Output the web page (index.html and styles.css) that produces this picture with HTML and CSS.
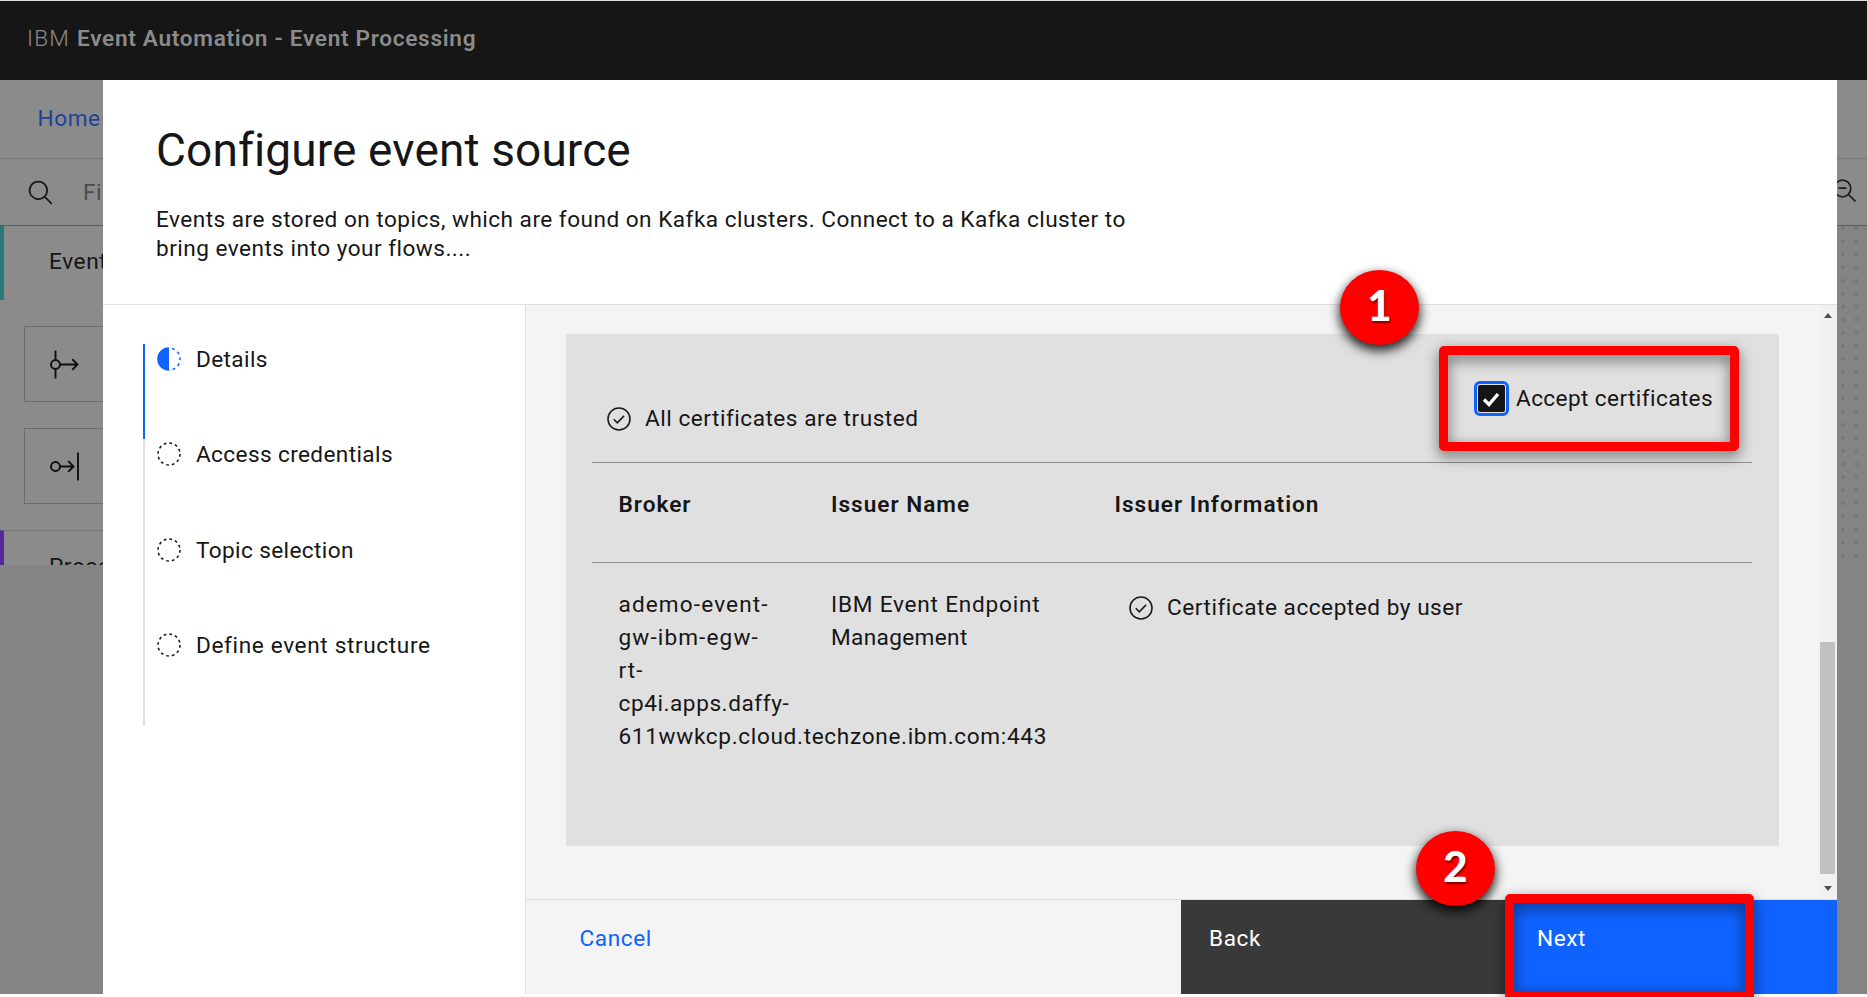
FILE: index.html
```html
<!DOCTYPE html>
<html lang="en">
<head>
<meta charset="utf-8">
<title>IBM Event Automation - Event Processing</title>
<link rel="stylesheet" href="styles.css">
</head>
<body>
<div class="app">
  <header class="topbar"><span class="brand-prefix">IBM</span><span class="brand-name">Event Automation - Event Processing</span></header>

  <div class="shell">
    <aside class="palette">
      <div class="breadcrumb">Home</div>
      <div class="search">
        <svg class="icon-search" viewBox="0 0 32 32"><path d="M29 27.586l-7.552-7.552a11.018 11.018 0 1 0-1.414 1.414L27.586 29zM4 13a9 9 0 1 1 9 9 9.01 9.01 0 0 1-9-9z"/></svg>
        <span>Find</span>
      </div>
      <div class="group group-events">Events</div>
      <div class="node"><svg viewBox="0 0 32 32"><g fill="none" stroke="#0f0f0f" stroke-width="1.9"><path d="M7.5 1.5v9M7.5 20.5v9M12 15.5h18M24.200 10.200l5.300 5.300l-5.300 5.300"/><circle cx="7.500" cy="15.500" r="4.500"/></g></svg></div>
      <div class="node"><svg viewBox="0 0 32 32"><g fill="none" stroke="#0f0f0f" stroke-width="1.9"><path d="M30 1.500v28M12 15.500h14M20.200 10.200l5.300 5.300l-5.300 5.300"/><circle cx="7.500" cy="15.500" r="4.500"/></g></svg></div>
      <div class="group group-processors">Processors</div>
    </aside>

    <main class="modal">
      <header class="modal-head">
        <h1>Configure event source</h1>
        <p>Events are stored on topics, which are found on Kafka clusters. Connect to a Kafka cluster to<br>bring events into your flows....</p>
      </header>
      <div class="modal-body">
        <nav class="steps">
          <div class="step current"><svg viewBox="0 0 24 24"><path d="M12 .2a11.800 11.800 0 0 0 0 23.600z" fill="#0f62fe"/><path d="M12 1a11 11 0 0 1 0 22" fill="none" stroke="#0f62fe" stroke-width="1.500" stroke-dasharray="3 3.200" stroke-dashoffset="-3"/></svg><span>Details</span></div>
          <div class="step"><svg viewBox="0 0 24 24"><circle class="dashes" cx="12" cy="12" r="11"/></svg><span>Access credentials</span></div>
          <div class="step"><svg viewBox="0 0 24 24"><circle class="dashes" cx="12" cy="12" r="11"/></svg><span>Topic selection</span></div>
          <div class="step"><svg viewBox="0 0 24 24"><circle class="dashes" cx="12" cy="12" r="11"/></svg><span class="step-long">Define event structure</span></div>
        </nav>
        <section class="content">
          <div class="scroll-area">
            <div class="certs">
              <div class="certs-head">
                <div class="trusted"><svg viewBox="0 0 24 24"><circle cx="12" cy="12" r="11"/><path d="M6.800 12.300l3.500 3.500l6.700-6.900"/></svg><span>All certificates are trusted</span></div>
                <div class="accept"><span class="checkbox"><svg viewBox="0 0 27 27"><path d="M6 14.500l5 5l9-10.500" fill="none" stroke="#fff" stroke-width="3.400"/></svg></span><span>Accept certificates</span></div>
              </div>
              <div class="row row-head"><span>Broker</span><span>Issuer Name</span><span>Issuer Information</span></div>
              <div class="row row-data">
                <div class="broker"><span class="host-wide">ademo-event-</span><br><span class="host-wide">gw-ibm-egw-</span><br><span class="host-wide">rt-</span><br><span class="host-tight">cp4i.apps.daffy-</span><br><span class="host">611wwkcp.cloud.techzone.ibm.com:443</span></div>
                <div><span class="issuer">IBM Event Endpoint</span><br><span class="issuer-tight">Management</span></div>
                <div class="status"><svg viewBox="0 0 24 24"><circle cx="12" cy="12" r="11"/><path d="M6.800 12.300l3.500 3.500l6.700-6.900"/></svg><span>Certificate accepted by user</span></div>
              </div>
            </div>
            <div class="scrollbar"><i class="arrow up"></i><i class="thumb"></i><i class="arrow down"></i></div>
          </div>
          <footer class="actions">
            <div class="btn cancel"><span>Cancel</span></div>
            <div class="btn back"><span>Back</span></div>
            <div class="btn next"><span>Next</span></div>
          </footer>
        </section>
      </div>
    </main>

    <aside class="canvas">
      <div class="canvas-top"></div>
      <div class="canvas-tools"><svg viewBox="0 0 24 24"><g fill="none" stroke="#1c1c1c" stroke-width="1.700"><circle cx="9.500" cy="9.500" r="8.300"/><path d="M15.500 15.500l7 7M5.500 9.200h8"/></g></svg></div>
      <div class="dots"></div>
    </aside>
  </div>
</div>

<div class="mark box box-accept"></div>
<div class="mark box box-next"></div>
<div class="mark badge badge-1"><span>1</span></div>
<div class="mark badge badge-2"><span>2</span></div>
</body>
</html>
```
FILE: styles.css
```css
* { box-sizing: border-box; }
html, body { margin: 0; height: 997px; overflow: hidden; background: #fff; }
body {
  position: relative;
  width: 1867px;
  font: 22.600px/30px Roboto, "Liberation Sans", sans-serif;
  letter-spacing: .6px;
  color: #161616;
}
span { white-space: nowrap; }

.app { height: 994px; display: flex; flex-direction: column; border-top: 1px solid #dcdcdc; }
.topbar { height: 79px; flex: none; background: #161616; color: #8b8b8b; padding: 23px 0 0 27px; display: flex; gap: 7px; }
.brand-prefix { font-weight: 300; letter-spacing: 1.200px; }
.brand-name { font-weight: 600; letter-spacing: .7px; }
.shell { flex: 1; min-height: 0; display: grid; grid-template-columns: 103px 1734px 30px; background: #848484; }

.palette { height: 485px; overflow: hidden; background: #8b8b8b; display: flex; flex-direction: column; white-space: nowrap; }
.breadcrumb { flex: none; height: 79px; border-bottom: 1px solid #777; padding: 24px 0 0 37.500px; color: #1c429c; }
.search { flex: none; height: 67px; border-bottom: 1px solid #5a5a5a; padding: 19px 0 0 27px; display: flex; color: #4c4c4c; }
.icon-search { width: 28px; height: 28px; margin: 1px 28px 0 0; flex: none; fill: #1a1a1a; }
.group { flex: none; border-left: 4px solid; padding-left: 45px; color: #161616; }
.group-events { height: 74px; border-left-color: #287a76; padding-top: 21px; margin-bottom: 26px; }
.node { flex: none; width: 200px; height: 76px; margin: 0 0 26px 24px; border: 1px solid #6c6c6c; padding: 22px 0 0 23px; }
.node svg { width: 32px; height: 32px; display: block; }
.group-processors { height: 60px; border-top: 1px solid #777; border-left-color: #52289a; padding-top: 21px; }

.modal { background: #fff; display: flex; flex-direction: column; min-height: 0; }
.modal-head { flex: none; height: 225px; padding: 42px 53px 0; border-bottom: 1px solid #e0e0e0; }
h1 { margin: 0; font-size: 46px; line-height: 56px; font-weight: 400; letter-spacing: .12px; white-space: nowrap; }
.modal-head p { margin: 26.500px 0 0; line-height: 29.500px; letter-spacing: .48px; }
.modal-body { flex: 1; min-height: 0; display: grid; grid-template-columns: 423px 1fr; }

.steps { padding: 39px 0 0 40px; border-right: 1px solid #e0e0e0; }
.step { height: 95.400px; border-left: 2.500px solid #e0e0e0; padding: 1px 0 0 12px; display: flex; gap: 15px; letter-spacing: .38px; }
.step-long { letter-spacing: .64px; }
.step.current { border-color: #0f62fe; }
.step svg { width: 24px; height: 24px; margin-top: 2px; }
.dashes { fill: none; stroke: #161616; stroke-width: 1.500; stroke-dasharray: 2.760 3; }

.content { background: #f4f4f4; display: flex; flex-direction: column; min-height: 0; }
.scroll-area { flex: 1; min-height: 0; display: flex; justify-content: space-between; }
.certs { width: 1213px; height: 511.500px; margin: 29px 0 0 39.500px; background: #e0e0e0; padding: 0 26.500px; }
.certs-head { height: 128.500px; border-bottom: 1px solid #8d8d8d; display: flex; justify-content: space-between; }
.trusted { display: flex; gap: 14px; padding: 70px 0 0 15px; letter-spacing: .52px; }
.trusted svg, .status svg { width: 24px; height: 24px; margin-top: 3px; fill: none; stroke: #1c1c1c; stroke-width: 1.600; }
.accept { display: flex; gap: 11px; padding-top: 50px; width: 274px; letter-spacing: .4px; }
.checkbox { width: 27px; height: 27px; margin-top: 1px; background: #161616; border-radius: 2px; outline: 3px solid #0f62fe; outline-offset: 1px; display: block; }
.checkbox svg { display: block; width: 27px; height: 27px; }
.row { display: grid; grid-template-columns: 212.500px 283.500px 1fr; padding-left: 26.500px; line-height: 33px; }
.row-head { height: 100px; border-bottom: 1px solid #8d8d8d; padding-top: 25px; font-weight: 600; letter-spacing: 1px; }
.row-data { padding-top: 25px; }
.broker { width: 186px; }
.host { letter-spacing: .67px; }
.host-wide { letter-spacing: 1.120px; }
.host-tight { letter-spacing: .57px; }
.issuer { letter-spacing: .78px; }
.issuer-tight { letter-spacing: .36px; }
.status { display: flex; gap: 14px; padding: 3px 0 0 14.500px; letter-spacing: .53px; }
.status svg { margin-top: 5px; }

.scrollbar { width: 19px; background: #f1f1f1; display: flex; flex-direction: column; align-items: center; padding: 8px 0 8px; }
.arrow { flex: none; border: 4.500px solid transparent; }
.arrow.up { border-top: 0; border-bottom: 5px solid #505050; }
.arrow.down { border-bottom: 0; border-top: 5px solid #505050; margin-top: 12px; }
.thumb { width: 15px; height: 232px; margin-top: auto; background: #c1c1c1; }

.actions { flex: none; height: 95px; border-top: 1px solid #e0e0e0; display: grid; grid-template-columns: 655px 328px 328px; }
.btn { padding: 24px 0 0 28px; }
.cancel { color: #0f62fe; padding-left: 53.500px; }
.back { background: #393939; color: #fff; }
.next { background: #0f62fe; color: #fff; }

.canvas { display: flex; flex-direction: column; height: 485px; overflow: hidden; }
.canvas-top { height: 79px; flex: none; background: #8b8b8b; border-bottom: 1px solid #777; }
.canvas-tools { height: 67px; flex: none; background: #8b8b8b; border-bottom: 1px solid #5a5a5a; overflow: hidden; }
.canvas-tools svg { display: block; width: 24px; height: 24px; margin: 20px 0 0 -4px; }
.dots { flex: 1; background: radial-gradient(circle, #767676 1.500px, transparent 2px) -.5px -4.500px / 13.120px 13.120px; }

.mark { position: absolute; }
.box { border: 9px solid #f00; border-radius: 5px; filter: drop-shadow(0 5px 7px rgba(0, 0, 0, .55)); }
.box-accept { left: 1439px; top: 346px; width: 300px; height: 105px; }
.box-next { left: 1505px; top: 894px; width: 249px; height: 106px; }
.badge {
  width: 79px; height: 75px; border-radius: 50%; background: #f00; color: #fff;
  box-shadow: 0 5px 11px 1px rgba(0, 0, 0, .85);
  font: 900 42px/71px Lato, sans-serif; letter-spacing: 0; text-align: center; text-shadow: 1px 2px 2px rgba(0, 0, 0, .5);
}
.badge-1 { left: 1340px; top: 270px; }
.badge-2 { left: 1416px; top: 831px; }
```
